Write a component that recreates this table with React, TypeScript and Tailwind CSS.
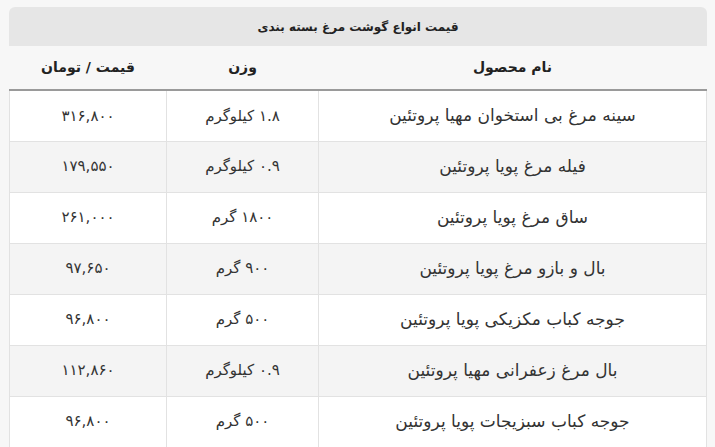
import React from 'react';

interface Row {
  name: string;
  weight: string;
  price: string;
}

const rows: Row[] = [
  { name: 'سینه مرغ بی استخوان مهیا پروتئین', weight: '۱.۸ کیلوگرم', price: '۳۱۶,۸۰۰' },
  { name: 'فیله مرغ پویا پروتئین', weight: '۰.۹ کیلوگرم', price: '۱۷۹,۵۵۰' },
  { name: 'ساق مرغ پویا پروتئین', weight: '۱۸۰۰ گرم', price: '۲۶۱,۰۰۰' },
  { name: 'بال و بازو مرغ پویا پروتئین', weight: '۹۰۰ گرم', price: '۹۷,۶۵۰' },
  { name: 'جوجه کباب مکزیکی پویا پروتئین', weight: '۵۰۰ گرم', price: '۹۶,۸۰۰' },
  { name: 'بال مرغ زعفرانی مهیا پروتئین', weight: '۰.۹ کیلوگرم', price: '۱۱۲,۸۶۰' },
  { name: 'جوجه کباب سبزیجات پویا پروتئین', weight: '۵۰۰ گرم', price: '۹۶,۸۰۰' },
];

const App: React.FC = () => {
  return (
    <div
      dir="rtl"
      className="min-h-[447px] bg-[#f7f7f7] pt-[7px] pl-[9px] pr-[8px] text-[#333]"
      style={{ fontFamily: '"DejaVu Sans", "Noto Sans", sans-serif' }}
    >
      <div className="flex h-[39px] items-center justify-center rounded-t-[6px] bg-[#e6e6e6] text-[12px] font-bold text-[#222]">
        قیمت انواع گوشت مرغ بسته بندی
      </div>
      <table className="w-full border-collapse text-[15px]">
        <thead>
          <tr className="h-[44px] border-b-2 border-[#9a9a9a] bg-[#f7f7f7] text-[14px]">
            <th className="w-[388px] text-center font-bold text-[#222]">نام محصول</th>
            <th className="w-[152px] text-center font-bold text-[#222]">وزن</th>
            <th className="text-center font-bold text-[#222]">قیمت / تومان</th>
          </tr>
        </thead>
        <tbody>
          {rows.map((row, i) => (
            <tr key={i} className={`h-[51px] ${i % 2 === 1 ? 'bg-[#f4f4f4]' : 'bg-white'}`}>
              <td className="border border-[#e2e2e2] text-center text-[17px]">{row.name}</td>
              <td className="border border-[#e2e2e2] text-center">{row.weight}</td>
              <td className="border border-[#e2e2e2] text-center">{row.price}</td>
            </tr>
          ))}
        </tbody>
      </table>
    </div>
  );
};

export default App;
